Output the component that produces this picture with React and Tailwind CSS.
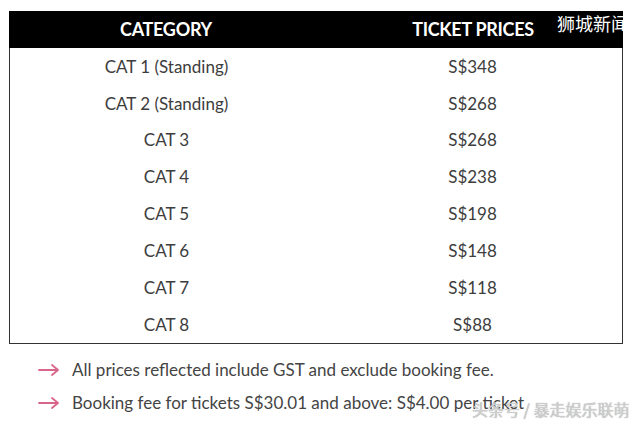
const rows = [
  { cat: "CAT 1 (Standing)", price: "S$348" },
  { cat: "CAT 2 (Standing)", price: "S$268" },
  { cat: "CAT 3", price: "S$268" },
  { cat: "CAT 4", price: "S$238" },
  { cat: "CAT 5", price: "S$198" },
  { cat: "CAT 6", price: "S$148" },
  { cat: "CAT 7", price: "S$118" },
  { cat: "CAT 8", price: "S$88" },
];

const notes = [
  "All prices reflected include GST and exclude booking fee.",
  "Booking fee for tickets S$30.01 and above: S$4.00 per ticket",
];

const Arrow = () => (
  <svg width="22" height="12" viewBox="0 0 22 12" className="shrink-0">
    <path d="M1 6h19M14 1l6 5-6 5" fill="none" stroke="#d9668a" strokeWidth="1.8" strokeLinecap="round" strokeLinejoin="round" />
  </svg>
);

export default function App() {
  return (
    <div className="relative w-[640px] h-[423px] bg-white overflow-hidden font-['Lato','Liberation_Sans',sans-serif]">
      <div className="ml-[9px] mt-[11px] w-[614px]">
        <div className="relative grid grid-cols-[314px_1fr] h-[37px] bg-black text-white text-[18px] font-bold items-center overflow-hidden">
          <div className="text-center tracking-[-0.3px]">CATEGORY</div>
          <div className="text-center tracking-[-0.3px]">TICKET PRICES</div>
          <div className="absolute left-[548px] top-[-1px] whitespace-nowrap text-[18px] font-normal font-['Noto_Sans_CJK_SC',sans-serif]">
            狮城新闻
          </div>
        </div>
        <div className="border-x border-b border-[#333] text-[17px] text-[#3d3d3d]">
          {rows.map((r) => (
            <div key={r.cat} className="grid grid-cols-[313px_1fr] h-[36.9px] items-center">
              <div className="text-center">{r.cat}</div>
              <div className="text-center">{r.price}</div>
            </div>
          ))}
        </div>
      </div>
      <div className="mt-[14px] ml-[38px] flex flex-col gap-[10px] text-[17px] text-[#444]">
        {notes.map((n) => (
          <div key={n} className="flex items-center gap-[12px] h-[23px]">
            <Arrow />
            <span className="whitespace-nowrap">{n}</span>
          </div>
        ))}
      </div>
      <div className="absolute left-[472px] top-[397px] text-[16px] whitespace-nowrap text-[#cfcfcf] font-['Noto_Sans_CJK_SC',sans-serif] [text-shadow:0_0_1px_#999]">
        头条号 / 暴走娱乐联萌
      </div>
    </div>
  );
}
